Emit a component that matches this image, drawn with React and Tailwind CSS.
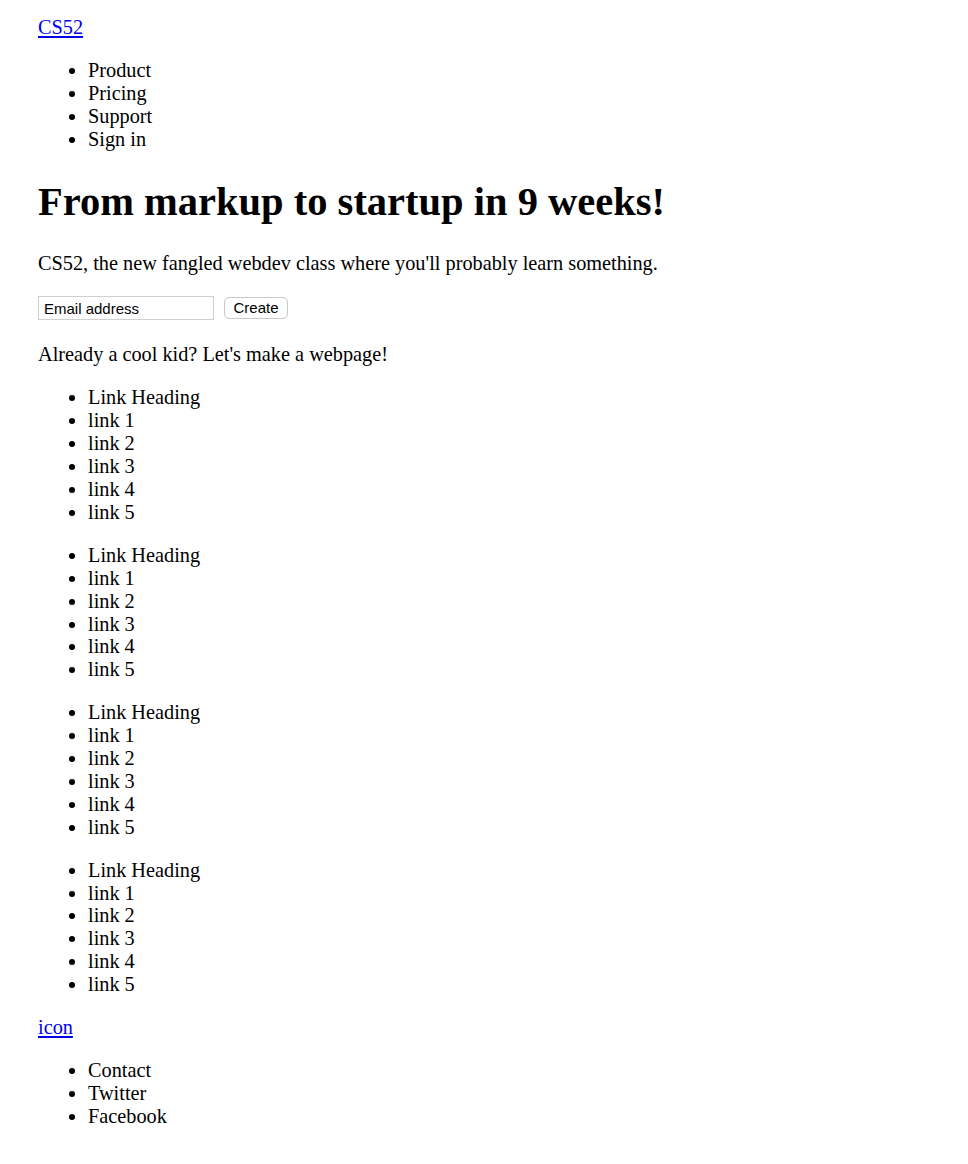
const footerLinks = ["Contact", "Twitter", "Facebook"];
const navLinks = ["Product", "Pricing", "Support", "Sign in"];
const linkGroups = [1, 2, 3, 4];

function BulletList({ items }) {
  return (
    <ul className="my-[20px] list-disc pl-[50px]">
      {items.map((item, i) => (
        <li key={i}>{item}</li>
      ))}
    </ul>
  );
}

export default function App() {
  return (
    <div
      className="min-h-[1164px] bg-white px-[38px] pt-[16px] pb-[20px] text-[20.3px] leading-[22.9px] text-black"
      style={{ fontFamily: '"Liberation Serif", "Times New Roman", serif' }}
    >
      <a href="#" className="text-[#0000ee] underline">CS52</a>
      <BulletList items={navLinks} />

      <h1 className="mt-[28px] mb-[27px] text-[40.5px] font-bold leading-[46px]">
        From markup to startup in 9 weeks!
      </h1>
      <p className="my-[20px]">
        CS52, the new fangled webdev class where you'll probably learn something.
      </p>

      <form className="mt-[22px] mb-[23px] flex items-center gap-[10px]" onSubmit={(e) => e.preventDefault()}>
        <input
          type="text"
          defaultValue="Email address"
          className="h-[24px] w-[176px] border border-[#d0d0d0] px-[5px] text-[15px] text-black"
          style={{ fontFamily: '"Liberation Sans", Arial, sans-serif' }}
        />
        <button
          type="submit"
          className="h-[22px] w-[64px] rounded-[5px] border border-[#c8c8c8] bg-white text-[15px] leading-[20px] text-black"
          style={{ fontFamily: '"Liberation Sans", Arial, sans-serif' }}
        >
          Create
        </button>
      </form>

      <p className="my-[20px]">Already a cool kid? Let's make a webpage!</p>

      {linkGroups.map((g) => (
        <BulletList
          key={g}
          items={["Link Heading", "link 1", "link 2", "link 3", "link 4", "link 5"]}
        />
      ))}

      <a href="#" className="text-[#0000ee] underline">icon</a>
      <BulletList items={footerLinks} />
    </div>
  );
}
